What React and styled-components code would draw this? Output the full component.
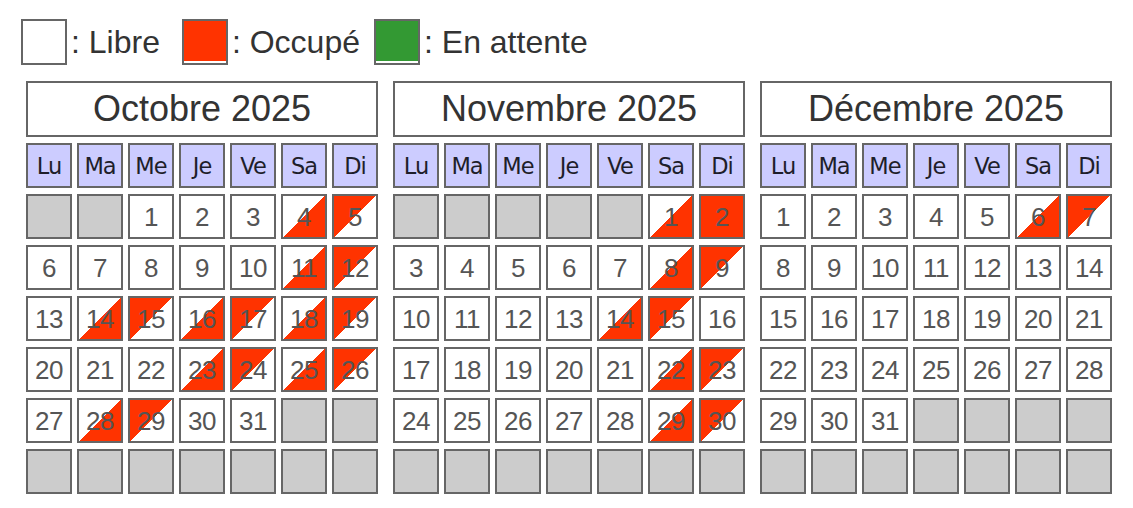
import React from "react";
import styled, { createGlobalStyle } from "styled-components";

const Global = createGlobalStyle`
  html, body { margin: 0; padding: 0; background: #ffffff; }
  body { font-family: "Liberation Sans", Arial, sans-serif; }
`;

const Page = styled.div`
  padding: 19px 0 0 21px;
  width: 1133px;
  height: 508px;
  box-sizing: border-box;
  background: #fff;
`;

const Legend = styled.div`
  display: flex;
  align-items: center;
  height: 46px;
`;

const LegendItem = styled.div`
  display: flex;
  align-items: center;
  margin-right: ${(p) => p.$gap}px;
`;

const Swatch = styled.span`
  display: block;
  width: 46px;
  height: 46px;
  box-sizing: border-box;
  border: 2px solid #666;
  background: ${(p) => p.$color};
  box-shadow: ${(p) => (p.$line ? "inset 0 -2px 0 #fff" : "none")};
`;

const LegendLabel = styled.span`
  font-family: "Liberation Sans", Arial, sans-serif;
  font-size: 32px;
  color: #333;
  margin-left: 4px;
  line-height: 46px;
`;

const Calendars = styled.div`
  display: flex;
  gap: 15px;
  margin-top: 16px;
  padding-left: 5px;
`;

const Month = styled.div`
  width: 352px;
  display: flex;
  flex-direction: column;
  gap: 6px;
`;

const MonthTitle = styled.div`
  height: 56px;
  box-sizing: border-box;
  border: 2px solid #666;
  background: #fff;
  display: flex;
  align-items: center;
  justify-content: center;
  font-family: "Liberation Sans", Arial, sans-serif;
  font-size: 36px;
  color: #333;
`;

const Grid = styled.div`
  display: grid;
  grid-template-columns: repeat(7, 46px);
  grid-auto-rows: 45px;
  column-gap: 5px;
  row-gap: 6px;
`;

const DayName = styled.div`
  box-sizing: border-box;
  border: 2px solid #666;
  background: #ccccff;
  display: flex;
  align-items: center;
  justify-content: center;
  font-family: "DejaVu Sans", Verdana, sans-serif;
  font-size: 22.5px;
  color: #1e1e2a;
  letter-spacing: -1px;
  padding-top: 1px;
`;

const RED = "#ff3300";

const bgFor = (s) => {
  switch (s) {
    case "in":
      return `linear-gradient(to bottom right, #fff 50%, ${RED} 50%)`;
    case "out":
      return `linear-gradient(to bottom right, ${RED} 50%, #fff 50%)`;
    case "full":
      return RED;
    case "empty":
      return "#cccccc";
    default:
      return "#fff";
  }
};

const Day = styled.div`
  box-sizing: border-box;
  border: 2px solid #666;
  background: ${(p) => bgFor(p.$state)};
  display: flex;
  align-items: center;
  justify-content: center;
  font-family: "Liberation Sans", Arial, sans-serif;
  font-size: 26px;
  color: #555;
  letter-spacing: -0.5px;
  padding-top: 1px;
`;

const DAY_NAMES = ["Lu", "Ma", "Me", "Je", "Ve", "Sa", "Di"];

const months = [
  {
    title: "Octobre 2025",
    offset: 2,
    days: 31,
    states: { 4: "in", 5: "out", 11: "in", 12: "out", 14: "in", 15: "out", 16: "in", 17: "out", 18: "in", 19: "out", 23: "in", 24: "out", 25: "in", 26: "out", 28: "in", 29: "out" },
  },
  {
    title: "Novembre 2025",
    offset: 5,
    days: 30,
    states: { 1: "in", 2: "full", 8: "in", 9: "out", 14: "in", 15: "out", 22: "in", 23: "out", 29: "in", 30: "out" },
  },
  {
    title: "Décembre 2025",
    offset: 0,
    days: 31,
    states: { 6: "in", 7: "out" },
  },
];

function MonthView({ m }) {
  const cells = [];
  for (let i = 0; i < 42; i++) {
    const d = i - m.offset + 1;
    if (d < 1 || d > m.days) cells.push(<Day key={i} $state="empty" />);
    else
      cells.push(
        <Day key={i} $state={m.states[d] || "free"}>
          {d}
        </Day>
      );
  }
  return (
    <Month>
      <MonthTitle>{m.title}</MonthTitle>
      <Grid>
        {DAY_NAMES.map((n) => (
          <DayName key={n}>{n}</DayName>
        ))}
        {cells}
      </Grid>
    </Month>
  );
}

export default function App() {
  return (
    <Page>
      <Global />
      <Legend>
        <LegendItem $gap={22}>
          <Swatch $color="#fff" />
          <LegendLabel>: Libre</LegendLabel>
        </LegendItem>
        <LegendItem $gap={14}>
          <Swatch $color={RED} $line />
          <LegendLabel>: Occupé</LegendLabel>
        </LegendItem>
        <LegendItem $gap={0}>
          <Swatch $color="#339933" $line />
          <LegendLabel>: En attente</LegendLabel>
        </LegendItem>
      </Legend>
      <Calendars>
        {months.map((m) => (
          <MonthView key={m.title} m={m} />
        ))}
      </Calendars>
    </Page>
  );
}
